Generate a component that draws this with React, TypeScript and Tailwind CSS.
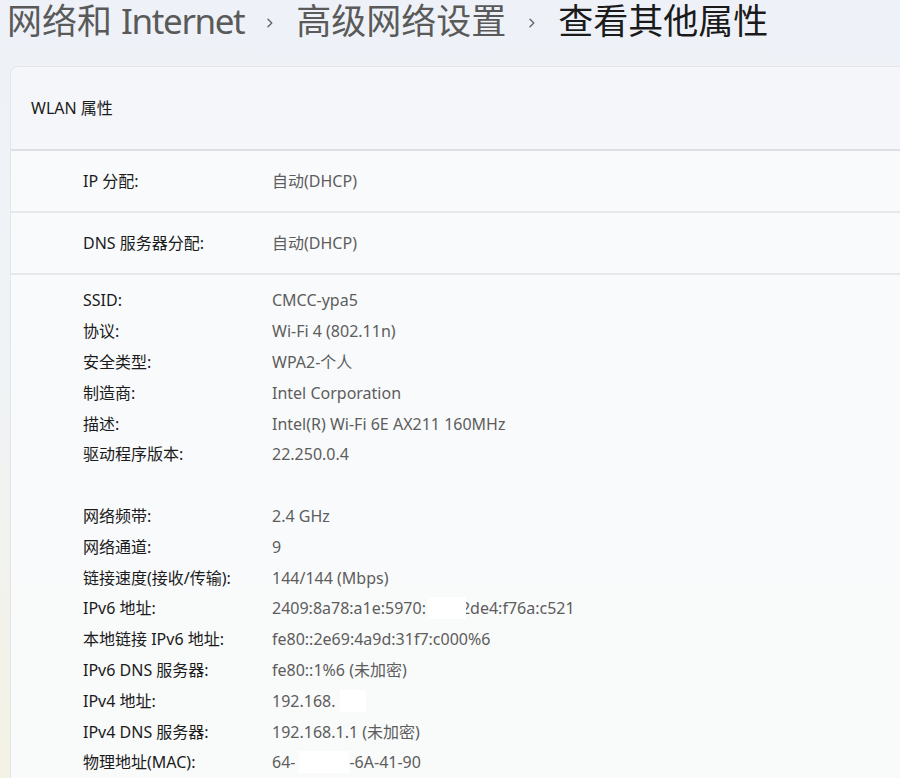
import React from 'react'

const font = { fontFamily: '"Noto Sans", "Noto Sans CJK SC", sans-serif' }

type Part = string | { hide: number; pull?: boolean }

const details: { label: string; value: Part[] }[] = [
  { label: 'SSID:', value: ['CMCC-ypa5'] },
  { label: '协议:', value: ['Wi-Fi 4 (802.11n)'] },
  { label: '安全类型:', value: ['WPA2-个人'] },
  { label: '制造商:', value: ['Intel Corporation'] },
  { label: '描述:', value: ['Intel(R) Wi-Fi 6E AX211 160MHz'] },
  { label: '驱动程序版本:', value: ['22.250.0.4'] },
  { label: '', value: [] },
  { label: '网络频带:', value: ['2.4 GHz'] },
  { label: '网络通道:', value: ['9'] },
  { label: '链接速度(接收/传输):', value: ['144/144 (Mbps)'] },
  { label: 'IPv6 地址:', value: ['2409:8a78:a1e:5970:', { hide: 38, pull: true }, '2de4:f76a:c521'] },
  { label: '本地链接 IPv6 地址:', value: ['fe80::2e69:4a9d:31f7:c000%6'] },
  { label: 'IPv6 DNS 服务器:', value: ['fe80::1%6 (未加密)'] },
  { label: 'IPv4 地址:', value: ['192.168.', { hide: 26 }] },
  { label: 'IPv4 DNS 服务器:', value: ['192.168.1.1 (未加密)'] },
  { label: '物理地址(MAC):', value: ['64-', { hide: 50 }, '-6A-41-90'] },
]

function Chevron() {
  return (
    <svg width="10" height="14" viewBox="0 0 10 14" className="mt-1 text-[#666]">
      <path d="M3 3.2 L6.8 7 L3 10.8" fill="none" stroke="currentColor" strokeWidth="1.4" strokeLinecap="round" strokeLinejoin="round" />
    </svg>
  )
}

function Value({ parts }: { parts: Part[] }) {
  return (
    <span className="flex items-center text-[#5d5d5d]">
      {parts.map((p, i) =>
        typeof p === 'string' ? (
          <span key={i}>{p}</span>
        ) : (
          <span
            key={i}
            className={`relative z-10 inline-block h-[22px] bg-white ${p.pull ? '-mr-[5px] ml-[2px]' : 'ml-[4px]'}`}
            style={{ width: p.hide }}
          />
        ),
      )}
    </span>
  )
}

export default function App() {
  return (
    <div
      className="relative w-[900px] h-[778px] overflow-hidden bg-gradient-to-b from-[#eef2f8] via-[#f0f3f5] to-[#f3f2e4] text-[16px]"
      style={font}
    >
      {/* breadcrumb */}
      <div className="flex items-center h-[42px] pl-[7px] text-[35px] leading-[42px] whitespace-nowrap">
        <span className="shrink-0 text-[#5a5a5a]">
          网络和 <span className="tracking-[-0.04em]">Internet</span>
        </span>
        <span className="shrink-0 mx-[21px]"><Chevron /></span>
        <span className="shrink-0 text-[#5a5a5a]">高级网络设置</span>
        <span className="shrink-0 mx-[21px]"><Chevron /></span>
        <span className="shrink-0 text-[#1b1b1b]">查看其他属性</span>
      </div>

      {/* card */}
      <div className="ml-[10px] mt-[24px] w-[910px] rounded-tl-lg border-l border-t border-[#e2e5ea] bg-[#fafbfc]/90 overflow-hidden">
        <div className="flex items-center h-[84px] pl-[20px] bg-[#f4f6f9] text-[#1b1b1b] border-b-2 border-[#dcdfe3]">
          WLAN 属性
        </div>

        <div className="flex items-center h-[62px] pl-[72px] border-b-2 border-[#e6e8eb]">
          <span className="w-[189px] text-[#1b1b1b]">IP 分配:</span>
          <span className="text-[#5d5d5d]">自动(DHCP)</span>
        </div>
        <div className="flex items-center h-[62px] pl-[72px] border-b-2 border-[#e6e8eb]">
          <span className="w-[189px] text-[#1b1b1b]">DNS 服务器分配:</span>
          <span className="text-[#5d5d5d]">自动(DHCP)</span>
        </div>

        <div className="pt-[10px] pl-[72px] pb-6">
          {details.map((d, i) => (
            <div key={i} className="flex items-center h-[30.8px]">
              <span className="w-[189px] text-[#1b1b1b] whitespace-nowrap">{d.label}</span>
              <Value parts={d.value} />
            </div>
          ))}
        </div>
      </div>
    </div>
  )
}
